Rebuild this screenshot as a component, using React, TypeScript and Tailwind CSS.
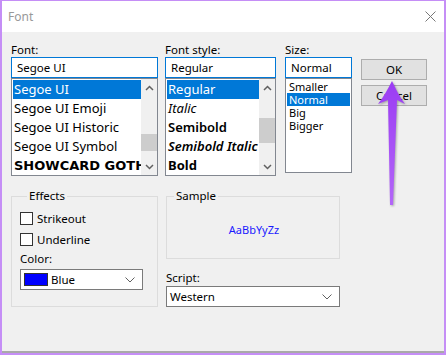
function Chevron({ up }: { up?: boolean }) {
  return (
    <svg width="9" height="6" viewBox="0 0 9 6">
      <polyline
        points={up ? "1,5 4.5,1.5 8,5" : "1,1 4.5,4.5 8,1"}
        fill="none"
        stroke="#606060"
        strokeWidth="1.5"
      />
    </svg>
  );
}

function ComboChevron() {
  return (
    <svg width="10" height="6" viewBox="0 0 10 6">
      <polyline points="0.5,0.5 5,5 9.5,0.5" fill="none" stroke="#606060" strokeWidth="1" />
    </svg>
  );
}

function ScrollBar({ thumb }: { thumb: string }) {
  return (
    <div className="flex w-[16px] shrink-0 flex-col bg-[#f0f0f0]">
      <div className="flex h-[17px] items-center justify-center">
        <Chevron up />
      </div>
      <div className="flex-1">
        <div className={thumb} />
      </div>
      <div className="flex h-[17px] items-center justify-center">
        <Chevron />
      </div>
    </div>
  );
}

function Label({ children }: { children: React.ReactNode }) {
  return <div className="h-[14px] text-[11.5px] leading-[14px] text-black">{children}</div>;
}

function TextBox({ value }: { value: string }) {
  return (
    <div className="flex h-[21px] items-center border border-[#0078d7] bg-white pl-[5px] text-[11.5px] text-black">
      {value}
    </div>
  );
}

function Combo({ children }: { children: React.ReactNode }) {
  return (
    <div className="flex h-[21px] items-center justify-between border border-[#7a7a7a] bg-white pl-[3px] pr-[7px] text-[11.5px] text-black">
      <div className="flex items-center">{children}</div>
      <ComboChevron />
    </div>
  );
}

function Button({ children }: { children: React.ReactNode }) {
  return (
    <div className="flex h-[21px] items-center justify-center border border-[#adadad] bg-[#e1e1e1] text-[11.5px] text-black">
      {children}
    </div>
  );
}

function CheckRow({ label }: { label: string }) {
  return (
    <div className="flex h-[21px] items-center gap-[4px] text-[11.5px] text-black">
      <div className="h-[13px] w-[13px] border border-[#333333] bg-white" />
      {label}
    </div>
  );
}

export default function App() {
  const fonts = ["Segoe UI", "Segoe UI Emoji", "Segoe UI Historic", "Segoe UI Symbol"];

  return (
    <div className="relative flex h-[355px] w-[446px] flex-col overflow-hidden border-x-2 border-t border-b-2 border-[#c58ef6] bg-[#f0f0f0] font-['Noto_Sans',sans-serif]">
      {/* title bar */}
      <div className="flex h-[31px] shrink-0 items-center justify-between bg-white pl-[6px] pr-[8px]">
        <span className="text-[12px] text-[#999999]">Font</span>
        <svg width="11" height="11" viewBox="0 0 11 11">
          <path d="M0.5 0.5 L10.5 10.5 M10.5 0.5 L0.5 10.5" stroke="#777777" strokeWidth="1" />
        </svg>
      </div>

      <div className="flex-1 border-b-2 border-[#a9a9a9] pl-[9px] pt-[11px]">
        {/* top row */}
        <div className="flex">
          <div className="w-[147px]">
            <Label>Font:</Label>
            <TextBox value="Segoe UI" />
            <div className="flex h-[98px] border border-[#828790] bg-white">
              <div className="flex-1 overflow-hidden whitespace-nowrap p-[1px] pr-0 text-[13px] leading-[19px]">
                {fonts.map((f, i) => (
                  <div
                    key={f}
                    className={i === 0 ? "h-[19px] bg-[#0078d7] pl-[1px] text-white" : "h-[19px] pl-[1px] text-black"}
                  >
                    {f}
                  </div>
                ))}
                <div className="h-[19px] pl-[1px] font-['DejaVu_Sans',sans-serif] text-[13px] font-black text-black">
                  SHOWCARD GOTHIC
                </div>
              </div>
              <ScrollBar thumb="mt-[38px] h-[17px] bg-[#cdcdcd]" />
            </div>
          </div>

          <div className="ml-[7px] w-[111px]">
            <Label>Font style:</Label>
            <TextBox value="Regular" />
            <div className="flex h-[98px] border border-[#828790] bg-white">
              <div className="flex-1 overflow-hidden whitespace-nowrap p-[1px] pr-0 text-[13px] leading-[19px] text-black">
                <div className="h-[19px] bg-[#0078d7] pl-[1px] text-white">Regular</div>
                <div className="h-[19px] pl-[1px] italic">Italic</div>
                <div className="h-[19px] pl-[1px] font-semibold">Semibold</div>
                <div className="h-[19px] pl-[1px] font-semibold italic">Semibold Italic</div>
                <div className="h-[19px] pl-[1px] font-bold">Bold</div>
              </div>
              <ScrollBar thumb="mt-[22px] h-[25px] bg-[#cdcdcd]" />
            </div>
          </div>

          <div className="ml-[9px] w-[67px]">
            <Label>Size:</Label>
            <TextBox value="Normal" />
            <div className="h-[95px] border border-[#828790] bg-white p-[1px] text-[11px] leading-[13px] text-black">
              <div className="h-[13px] pl-[2px]">Smaller</div>
              <div className="h-[13px] bg-[#0078d7] pl-[2px] text-white">Normal</div>
              <div className="h-[13px] pl-[2px]">Big</div>
              <div className="h-[13px] pl-[2px]">Bigger</div>
            </div>
          </div>

          <div className="ml-[9px] flex w-[66px] flex-col gap-[5px] pt-[16px]">
            <Button>OK</Button>
            <Button>Cancel</Button>
          </div>
        </div>

        {/* bottom row */}
        <div className="mt-[13px] flex">
          <fieldset className="w-[147px] border border-[#dcdcdc] px-[8px] pb-[15px]">
            <legend className="ml-[7px] px-[2px] text-[11.5px] leading-[14px] text-black">Effects</legend>
            <div className="pt-[5px]">
              <CheckRow label="Strikeout" />
              <CheckRow label="Underline" />
              <div className="mt-[2px]">
                <Label>Color:</Label>
              </div>
              <div className="mt-[3px] w-[123px]">
                <Combo>
                  <div className="mr-[3px] h-[13px] w-[24px] border border-[#333333] bg-[#0000ff]" />
                  Blue
                </Combo>
              </div>
            </div>
          </fieldset>

          <div className="ml-[8px] w-[174px]">
            <fieldset className="h-[70px] border border-[#dcdcdc]">
              <legend className="ml-[7px] px-[2px] text-[11.5px] leading-[14px] text-black">Sample</legend>
              <div className="flex h-[55px] items-center justify-center pl-[2px] text-[11px] text-[#1a1aff]">
                AaBbYyZz
              </div>
            </fieldset>
            <div className="mt-[12px]">
              <Label>Script:</Label>
            </div>
            <div className="mt-[1px]">
              <Combo>Western</Combo>
            </div>
          </div>
        </div>
      </div>

      {/* annotation arrow */}
      <svg
        className="pointer-events-none absolute left-[-2px] top-[-1px] drop-shadow-[1px_1px_1px_rgba(0,0,0,0.3)]"
        width="446"
        height="355"
        viewBox="0 0 446 355"
      >
        <defs>
          <linearGradient id="arrowFill" x1="0" y1="0" x2="0" y2="1">
            <stop offset="0" stopColor="#9b3cf3" />
            <stop offset="1" stopColor="#b366f8" />
          </linearGradient>
        </defs>
        <path
          d="M392 81 C396 89 399 96 405 104 L397 100 L393 205 L390 205 L388 100 L378 104 C384 96 388 89 392 81 Z"
          fill="url(#arrowFill)"
        />
      </svg>
    </div>
  );
}
